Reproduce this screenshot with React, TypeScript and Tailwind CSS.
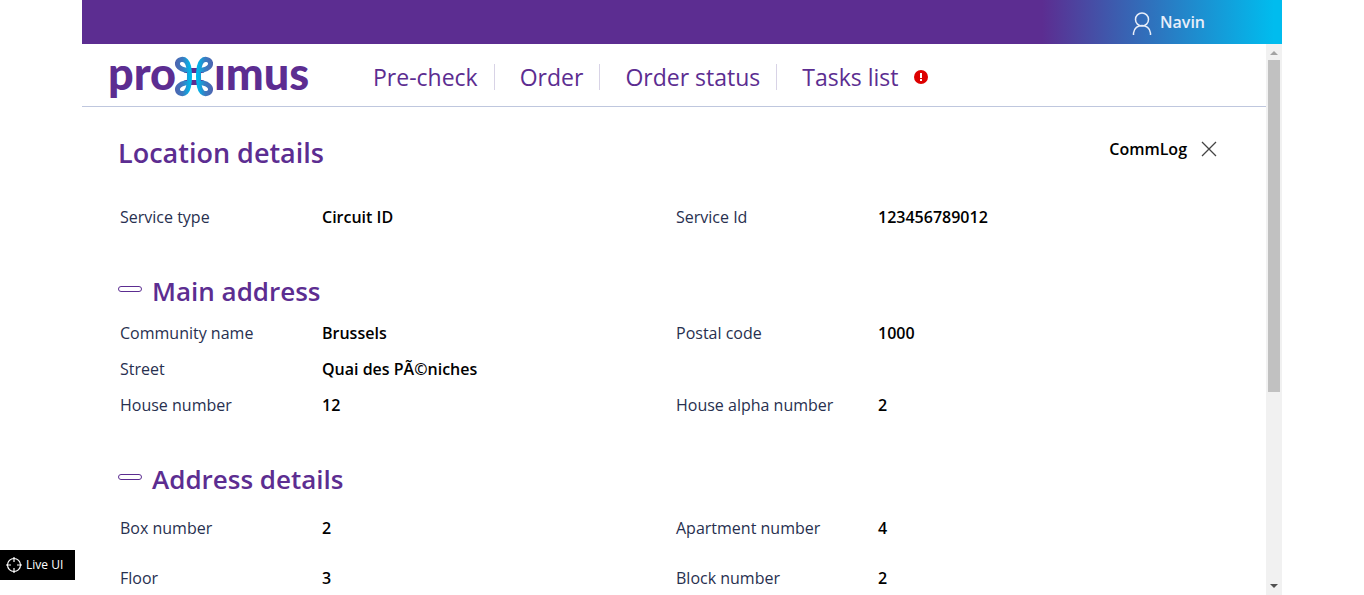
type Field = { label: string; value: string } | null;

const service: Field[] = [
  { label: "Service type", value: "Circuit ID" },
  { label: "Service Id", value: "123456789012" },
];

const mainAddress: Field[] = [
  { label: "Community name", value: "Brussels" },
  { label: "Postal code", value: "1000" },
  { label: "Street", value: "Quai des PÃ©niches" },
  null,
  { label: "House number", value: "12" },
  { label: "House alpha number", value: "2" },
];

const addressDetails: Field[] = [
  { label: "Box number", value: "2" },
  { label: "Apartment number", value: "4" },
  { label: "Floor", value: "3" },
  { label: "Block number", value: "2" },
];

function Fields({ items, tall = false }: { items: Field[]; tall?: boolean }) {
  return (
    <dl className={`-mr-0.5 grid grid-cols-2 pl-0.5 ${tall ? "auto-rows-[50px]" : "auto-rows-[36px]"}`}>
      {items.map((f, i) =>
        f ? (
          <div key={i} className="flex items-center">
            <dt className="w-[202px] shrink-0 text-[#28304f]">{f.label}</dt>
            <dd className="font-semibold text-black">{f.value}</dd>
          </div>
        ) : (
          <div key={i} />
        ),
      )}
    </dl>
  );
}

function SectionTitle({ children }: { children: string }) {
  return (
    <div className="flex h-10 items-center gap-2.5">
      <button
        type="button"
        aria-label={`Collapse ${children}`}
        className="mb-1 h-1.5 w-6 rounded-full border border-[#5c2d91] bg-white"
      />
      <h2 className="text-[26px] font-semibold text-[#5c2d91]">{children}</h2>
    </div>
  );
}

function Logo() {
  return (
    <svg width="212" height="62" viewBox="-5 0 212 62" role="img" aria-label="Proximus" className="block">
      <defs>
        <linearGradient id="strand" gradientUnits="userSpaceOnUse" x1="65" x2="105" y1="0" y2="0">
          <stop offset="0" stopColor="#5061ae" />
          <stop offset="0.22" stopColor="#3b7bc0" />
          <stop offset="0.4" stopColor="#00b5ea" />
          <stop offset="0.6" stopColor="#00b5ea" />
          <stop offset="0.78" stopColor="#3b7bc0" />
          <stop offset="1" stopColor="#5061ae" />
        </linearGradient>
      </defs>
      <g fill="#5c2d91" fontFamily="Lato, sans-serif" fontWeight="900" fontSize="45">
        <text x="-1" y="46">pro</text>
        <text x="105" y="46">ımus</text>
      </g>
      <g fill="none" strokeWidth="5" strokeLinecap="round">
        <path d="M77 26.5H93M77 38.5H93" stroke="#5c2d91" />
        <g stroke="url(#strand)">
          <path d="M76 26C71 25 68 22 68.500 19C69 15.500 74 14 77 17C80 20 80.500 26 80.500 32.500C80.500 39 80 45 77 48C74 51 69 49.500 68.500 46C68 43 71 40 76 39" />
          <path d="M94 26C99 25 102 22 101.500 19C101 15.500 96 14 93 17C90 20 89.500 26 89.500 32.500C89.500 39 90 45 93 48C96 51 101 49.500 101.500 46C102 43 99 40 94 39" />
        </g>
      </g>
    </svg>
  );
}

const links = ["Pre-check", "Order", "Order status", "Tasks list"];

export default function App() {
  return (
    <div className="h-screen overflow-hidden bg-white font-['Open_Sans',sans-serif] text-base">
      <div className="mx-auto flex h-full max-w-[1200px] flex-col">
        <header className="flex h-11 shrink-0 justify-end bg-[linear-gradient(to_right,#5c2d91_calc(100%-240px),#3c5daf_calc(100%-165px),#00bcee_calc(100%-8px))] pr-[77px]">
          <button type="button" className="flex items-center gap-2 font-semibold text-[#e8eef9]">
            <svg width="20" height="24" viewBox="0 0 20 24" fill="none" stroke="currentColor" strokeWidth="1.5" className="mt-1">
              <circle cx="10" cy="7.5" r="6.5" />
              <path d="M1.5 23V21C2 16 6 13.5 10 13.5S18 16 18.5 21V23" />
            </svg>
            Navin
          </button>
        </header>
        <div className="flex min-h-0 flex-1">
          <div className="min-w-0 flex-1 overflow-hidden">
            <div className="flex h-[63px] items-center border-b border-[#bfc7de] pl-[22px]">
              <a href="#home" className="shrink-0">
                <Logo />
              </a>
              <nav className="mt-1 ml-8 flex items-center text-[23px] leading-[26px] text-[#5c2d91]">
                {links.map((name, i) => (
                  <a
                    key={name}
                    href={`#${name}`}
                    className="flex h-[26px] items-center border-r border-[#d8d3e6] pr-4 pl-[25px] last:border-r-0"
                  >
                    {name}
                    {i === 3 && (
                      <svg width="14" height="14" viewBox="0 0 14 14" className="ml-4" role="img" aria-label="Attention">
                        <circle cx="7" cy="7" r="7" fill="#d00" />
                        <path d="M6 3h2v5H6zM6 9h2v2H6z" fill="#fff" />
                      </svg>
                    )}
                  </a>
                ))}
              </nav>
            </div>
            <main className="px-9 pt-[26px]">
              <div className="flex h-10 items-center justify-between pr-[13px]">
                <h1 className="text-[27px] font-semibold text-[#5c2d91]">Location details</h1>
                <div className="mb-2 flex items-center gap-3.5">
                  <a href="#commlog" className="font-semibold text-black">CommLog</a>
                  <button type="button" aria-label="Close">
                    <svg width="16" height="16" viewBox="0 0 16 16" stroke="#444" strokeWidth="1.3" className="block">
                      <path d="M1 1l14 14M15 1L1 15" />
                    </svg>
                  </button>
                </div>
              </div>
              <section className="pt-[26px] pb-9">
                <Fields items={service} />
              </section>
              <section className="pb-9">
                <SectionTitle>Main address</SectionTitle>
                <div className="pt-1">
                  <Fields items={mainAddress} />
                </div>
              </section>
              <section>
                <SectionTitle>Address details</SectionTitle>
                <div className="pt-1">
                  <Fields items={addressDetails} tall />
                </div>
              </section>
            </main>
          </div>
          <div aria-hidden="true" className="flex w-4 shrink-0 flex-col items-center bg-[#f1f1f1]">
            <svg width="16" height="16" viewBox="0 0 16 16">
              <path d="M4 11h8L8 7z" fill="#a3a3a3" />
            </svg>
            <div className="flex w-3 flex-1 flex-col">
              <div className="h-[64%] bg-[#c1c1c1]" />
            </div>
            <svg width="16" height="16" viewBox="0 0 16 16">
              <path d="M4 5h8L8 9z" fill="#505050" />
            </svg>
          </div>
        </div>
      </div>
      <button
        type="button"
        className="fixed bottom-[15px] left-0 flex h-[30px] w-[75px] items-center gap-1 bg-black pl-1.5 text-xs whitespace-nowrap text-white"
      >
        <svg width="16" height="16" viewBox="0 0 16 16" fill="none" stroke="currentColor" strokeWidth="1.2">
          <circle cx="8" cy="8" r="6.5" />
          <path d="M8 0v5M8 11v5M0 8h5M11 8h5" />
        </svg>
        Live UI
      </button>
    </div>
  );
}
